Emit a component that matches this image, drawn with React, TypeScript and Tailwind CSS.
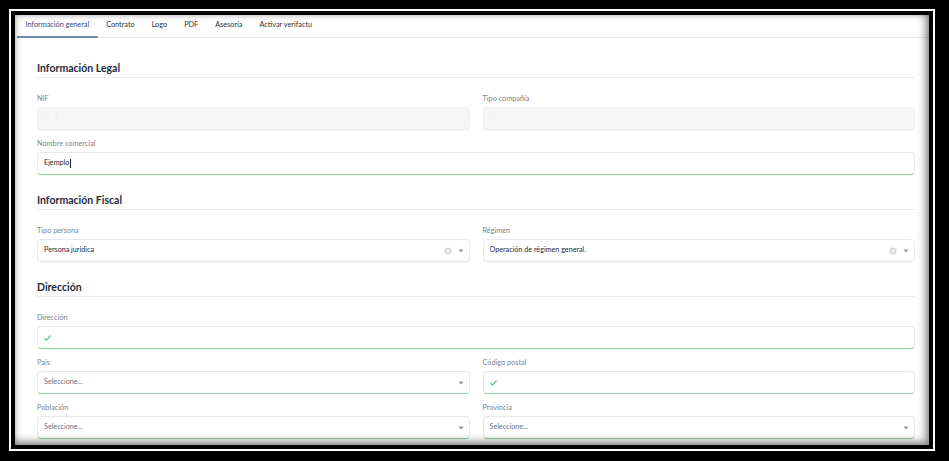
import React from "react";

function Caret() {
  return (
    <svg width="6" height="4" viewBox="0 0 6 4" className="shrink-0">
      <path d="M0.5 0.5 L5.5 0.5 L3 3.5 Z" fill="#8e949b" />
    </svg>
  );
}

function Clear() {
  return (
    <svg width="8" height="8" viewBox="0 0 8 8" className="shrink-0">
      <circle cx="4" cy="4" r="3.6" fill="#d3d6da" />
      <path d="M2.6 2.6 L5.4 5.4 M5.4 2.6 L2.6 5.4" stroke="#ffffff" strokeWidth="0.9" strokeLinecap="round" />
    </svg>
  );
}

function Check() {
  return (
    <svg width="7" height="6" viewBox="0 0 7 6" className="shrink-0">
      <path d="M0.8 3.4 L2.6 5 L6.2 0.8" stroke="#57b96a" strokeWidth="1.1" fill="none" strokeLinecap="round" strokeLinejoin="round" />
    </svg>
  );
}

function Label({ children }: { children: React.ReactNode }) {
  return <div className="h-[12px] leading-[12px] text-[7.3px] text-[#7c818a] mb-[2px] whitespace-nowrap">{children}</div>;
}

type BoxProps = {
  children?: React.ReactNode;
  green?: boolean;
  disabled?: boolean;
};

function Box({ children, green, disabled }: BoxProps) {
  const base =
    "h-[23px] rounded-[4px] border flex items-center gap-[6px] pl-[6px] pr-[5px] text-[7.2px] text-[#1f2937] shadow-[0_1px_1px_rgba(0,0,0,0.04)]";
  const tone = disabled
    ? "bg-[#f6f6f7] border-[#ebedf0]"
    : green
    ? "bg-white border-[#e6e8eb] border-b-[1.5px] border-b-[#8fd49c]"
    : "bg-white border-[#e6e8eb]";
  return <div className={base + " " + tone}>{children}</div>;
}

function Field({ label, children, green, disabled }: { label: string } & BoxProps) {
  return (
    <div className="flex flex-col min-w-0">
      <Label>{label}</Label>
      <Box green={green} disabled={disabled}>
        {children}
      </Box>
    </div>
  );
}

function SelectContent({ value, placeholder, clear }: { value?: string; placeholder?: string; clear?: boolean }) {
  return (
    <>
      <span className={"flex-1 truncate " + (value ? "text-[#1f2937]" : "text-[#6b7280]")}>{value ?? placeholder}</span>
      {clear && <Clear />}
      <Caret />
    </>
  );
}

function Section({ title, first, children }: { title: string; first?: boolean; children: React.ReactNode }) {
  return (
    <div className={first ? "" : "mt-[18px]"}>
      <div className="h-[17px] border-b border-[#e8eaed] text-[10.5px] leading-[14px] font-bold text-[#1e2b3c]">{title}</div>
      <div className="mt-[15px] flex flex-col gap-[8px]">{children}</div>
    </div>
  );
}

export default function App() {
  const tabs = ["Información general", "Contrato", "Logo", "PDF", "Asesoría", "Activar verifactu"];
  return (
    <div className="w-[949px] h-[461px] bg-black pt-[9px] pl-[9px] pr-[14px] pb-[10px] font-['Lato','Noto_Sans',sans-serif]">
      <div className="w-full h-full border-2 border-white">
        <div className="w-full h-full border-[4px] border-black">
          <div className="relative w-full h-full bg-white overflow-hidden">
            <div className="flex items-end h-[23px] border-b border-[#e6e8eb] pl-[2px]">
              {tabs.map((t, i) => (
                <div
                  key={t}
                  className={
                    "px-[8.5px] h-[23px] flex items-center text-[7.3px] whitespace-nowrap " +
                    (i === 0
                      ? "text-[#2d4a7a] border-b-2 border-[#7088b6] -mb-px"
                      : "text-[#27303d]")
                  }
                >
                  {t}
                </div>
              ))}
            </div>

            <div className="pt-[23px] pl-[22px] pr-[14px]">
              <Section title="Información Legal" first>
                <div className="grid grid-cols-2 gap-x-[13px]">
                  <Field label="NIF" disabled>
                    <span className="text-[#d5d7da] tracking-[2px]">·· ·</span>
                  </Field>
                  <Field label="Tipo compañía" disabled>
                    <span className="text-[#dcdee1]">·</span>
                  </Field>
                </div>
                <Field label="Nombre comercial" green>
                  <span className="relative flex items-center text-[#1f2937]">
                    Ejemplo
                    <span className="inline-block w-px h-[9px] bg-[#1f2937] ml-px" />
                  </span>
                </Field>
              </Section>

              <Section title="Información Fiscal">
                <div className="grid grid-cols-2 gap-x-[13px]">
                  <Field label="Tipo persona">
                    <SelectContent value="Persona jurídica" clear />
                  </Field>
                  <Field label="Régimen">
                    <SelectContent value="Operación de régimen general." clear />
                  </Field>
                </div>
              </Section>

              <Section title="Dirección">
                <Field label="Dirección" green>
                  <Check />
                </Field>
                <div className="grid grid-cols-2 gap-x-[13px]">
                  <Field label="País" green>
                    <SelectContent placeholder="Seleccione..." />
                  </Field>
                  <Field label="Código postal" green>
                    <Check />
                  </Field>
                </div>
                <div className="grid grid-cols-2 gap-x-[13px]">
                  <Field label="Población" green>
                    <SelectContent placeholder="Seleccione..." />
                  </Field>
                  <Field label="Provincia" green>
                    <SelectContent placeholder="Seleccione..." />
                  </Field>
                </div>
              </Section>
            </div>

            <div className="pointer-events-none absolute inset-0 shadow-[inset_0_0_6px_rgba(0,0,0,0.35),inset_-5px_-5px_7px_rgba(0,0,0,0.3)]" />
          </div>
        </div>
      </div>
    </div>
  );
}
